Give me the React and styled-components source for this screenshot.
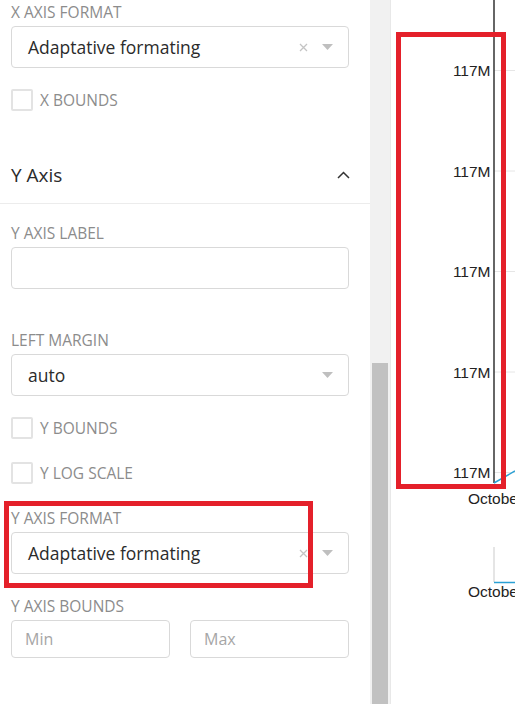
import React from 'react'
import styled, { createGlobalStyle } from 'styled-components'

const GlobalStyle = createGlobalStyle`
  html, body {
    margin: 0;
    padding: 0;
    background: #fff;
    overflow: hidden;
  }
`

const Page = styled.div`
  position: relative;
  display: flex;
  width: 515px;
  height: 704px;
  overflow: hidden;
  font-family: 'Open Sans', 'Noto Sans', sans-serif;
`

const Sidebar = styled.div`
  width: 370px;
  flex-shrink: 0;
  display: flex;
  flex-direction: column;
`

const Section = styled.div`
  display: flex;
  flex-direction: column;
  padding: 0 21px 0 11px;
`

const Field = styled.div`
  display: flex;
  flex-direction: column;
  margin-top: ${p => p.$top || 0}px;
`

const Label = styled.div`
  font-size: 15.5px;
  line-height: 16px;
  color: #8c8c8c;
  margin-bottom: 6px;
`

const SelectBox = styled.div`
  box-sizing: border-box;
  height: 42px;
  display: flex;
  align-items: center;
  padding: 0 15px 0 16px;
  border: 1px solid #d9d9d9;
  border-radius: 4px;
  font-size: 17.5px;
  color: #2b2b2b;
`

const SelectValue = styled.span`
  flex: 1;
`

const ClearIcon = styled.span`
  display: flex;
  margin-right: 14px;
`

const TextInput = styled.div`
  box-sizing: border-box;
  height: ${p => p.$h || 42}px;
  display: flex;
  align-items: center;
  padding: 0 13px;
  border: 1px solid #d9d9d9;
  border-radius: 4px;
  font-size: 16px;
  color: #a6a6a6;
`

const InputRow = styled.div`
  display: flex;
  gap: 20px;

  & > * {
    flex: 1;
  }
`

const CheckRow = styled.div`
  display: flex;
  align-items: center;
  gap: 7px;
  margin-top: ${p => p.$top || 0}px;
  font-size: 15.5px;
  color: #8c8c8c;
`

const CheckBox = styled.span`
  box-sizing: border-box;
  width: 22px;
  height: 22px;
  border: 2px solid #e3e3e3;
  border-radius: 2px;
`

const Header = styled.div`
  box-sizing: border-box;
  height: 57px;
  margin-top: 36px;
  display: flex;
  align-items: center;
  justify-content: space-between;
  padding: 0 20px 0 11px;
  border-bottom: 1px solid #ececec;
  font-size: 19px;
  color: #2b2b2b;
`

const ScrollTrack = styled.div`
  width: 20px;
  flex-shrink: 0;
  background: #f1f1f1;
  display: flex;
  flex-direction: column;
  padding-top: 363px;
  box-sizing: border-box;
`

const ScrollThumb = styled.div`
  flex: 1;
  margin: 0 2px;
  background: #c1c1c1;
`

const ChartPanel = styled.div`
  flex: 1;
  border-left: 1px solid #e8e8e8;
  overflow: hidden;
`

const Annotation = styled.div`
  position: absolute;
  box-sizing: border-box;
  border: 5px solid #e4202a;
  pointer-events: none;
`

const Caret = () => (
  <svg width="11" height="6" viewBox="0 0 11 6">
    <path d="M0 0 L11 0 L5.5 6 Z" fill="#bfbfbf" />
  </svg>
)

const Clear = () => (
  <svg width="9" height="9" viewBox="0 0 9 9">
    <path d="M1 1 L8 8 M8 1 L1 8" stroke="#c4c4c4" strokeWidth="1.3" />
  </svg>
)

const Select = ({ value, clearable }) => (
  <SelectBox>
    <SelectValue>{value}</SelectValue>
    {clearable && <ClearIcon><Clear /></ClearIcon>}
    <Caret />
  </SelectBox>
)

const ticks = [70.5, 171, 271.5, 372, 472.5]
const chartFont = "'Liberation Sans', Arial, sans-serif"

const Chart = () => (
  <svg width="124" height="704" viewBox="0 0 124 704">
    {ticks.map(y => (
      <g key={y}>
        <line x1="103" x2="124" y1={y} y2={y} stroke="#e6e6e6" strokeWidth="1" />
        <text x="99.5" y={y + 5.5} textAnchor="end" fontFamily={chartFont} fontSize="15.5" fill="#222">117M</text>
      </g>
    ))}
    <line x1="103" x2="103" y1="0" y2="483" stroke="#333" strokeWidth="1.5" />
    <path d="M103 483 L124 471" stroke="#2aa0d4" strokeWidth="1.5" fill="none" />
    <text x="77" y="504" fontFamily={chartFont} fontSize="15.5" fill="#222">October</text>
    <line x1="103" x2="103" y1="547" y2="582" stroke="#dcdcdc" strokeWidth="1.5" />
    <line x1="103" x2="124" y1="582.5" y2="582.5" stroke="#2aa0d4" strokeWidth="1.5" />
    <text x="77" y="597" fontFamily={chartFont} fontSize="15.5" fill="#222">October</text>
  </svg>
)

export default function App() {
  return (
    <>
      <GlobalStyle />
      <Page>
        <Sidebar>
          <Section>
            <Field $top={4}>
              <Label>X AXIS FORMAT</Label>
              <Select value="Adaptative formating" clearable />
            </Field>
            <CheckRow $top={21}><CheckBox />X BOUNDS</CheckRow>
          </Section>

          <Header>
            Y Axis
            <svg width="13" height="8" viewBox="0 0 13 8">
              <path d="M1 7 L6.5 1.5 L12 7" stroke="#333" strokeWidth="1.5" fill="none" />
            </svg>
          </Header>

          <Section>
            <Field $top={21}>
              <Label>Y AXIS LABEL</Label>
              <TextInput />
            </Field>
            <Field $top={43}>
              <Label>LEFT MARGIN</Label>
              <Select value="auto" />
            </Field>
            <CheckRow $top={21}><CheckBox />Y BOUNDS</CheckRow>
            <CheckRow $top={23}><CheckBox />Y LOG SCALE</CheckRow>
            <Field $top={26}>
              <Label>Y AXIS FORMAT</Label>
              <Select value="Adaptative formating" clearable />
            </Field>
            <Field $top={24}>
              <Label>Y AXIS BOUNDS</Label>
              <InputRow>
                <TextInput $h={38}>Min</TextInput>
                <TextInput $h={38}>Max</TextInput>
              </InputRow>
            </Field>
          </Section>
        </Sidebar>

        <ScrollTrack><ScrollThumb /></ScrollTrack>

        <ChartPanel><Chart /></ChartPanel>

        <Annotation style={{ left: 396, top: 32, width: 110, height: 457 }} />
        <Annotation style={{ left: 4, top: 501, width: 309, height: 87 }} />
      </Page>
    </>
  )
}
